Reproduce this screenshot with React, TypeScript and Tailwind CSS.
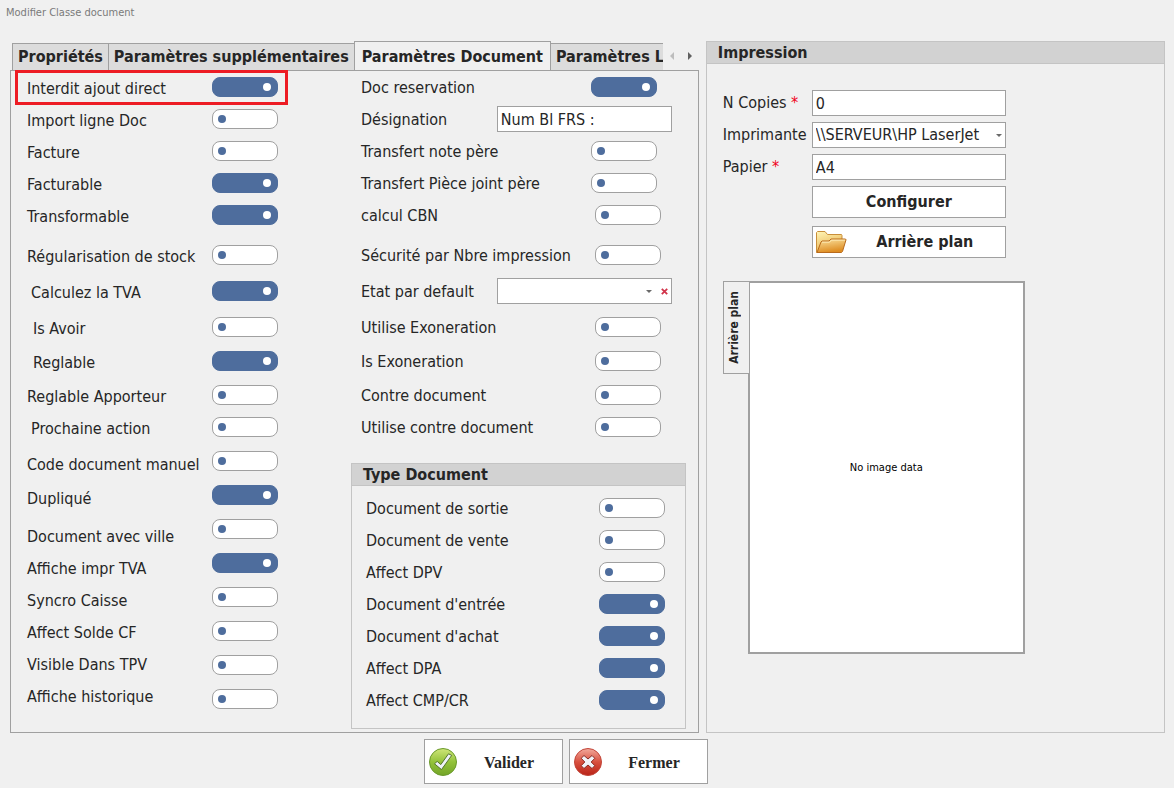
import React, { useState } from "react";
import clsx from "clsx";

type Option = {
  id: string;
  name: string;
  // spacing above the label and above its switch
  labelGap?: string;
  switchGap?: string;
  indent?: string;
  on?: boolean;
};

const generalOptions: Option[] = [
  { id: "interdit-ajout", name: "Interdit ajout direct", on: true },
  { id: "import-ligne", name: "Import ligne Doc", labelGap: "mt-3", switchGap: "mt-3" },
  { id: "facture", name: "Facture", labelGap: "mt-3", switchGap: "mt-3" },
  { id: "facturable", name: "Facturable", labelGap: "mt-3", switchGap: "mt-3", on: true },
  { id: "transformable", name: "Transformable", labelGap: "mt-3", switchGap: "mt-3", on: true },
  { id: "regularisation", name: "Régularisation de stock", labelGap: "mt-5", switchGap: "mt-5" },
  { id: "calcul-tva", name: "Calculez la TVA", labelGap: "mt-4", switchGap: "mt-4", indent: "pl-1", on: true },
  { id: "is-avoir", name: "Is Avoir", labelGap: "mt-4", switchGap: "mt-4", indent: "pl-1.5" },
  { id: "reglable", name: "Reglable", labelGap: "mt-3.5", switchGap: "mt-3.5", indent: "pl-1.5", on: true },
  { id: "reglable-apporteur", name: "Reglable Apporteur", labelGap: "mt-3.5", switchGap: "mt-3.5" },
  { id: "prochaine-action", name: "Prochaine action", labelGap: "mt-3", switchGap: "mt-3", indent: "pl-1" },
  { id: "code-manuel", name: "Code document manuel", labelGap: "mt-4", switchGap: "mt-3.5" },
  { id: "duplique", name: "Dupliqué", labelGap: "mt-3.5", switchGap: "mt-3.5", on: true },
  { id: "avec-ville", name: "Document avec ville", labelGap: "mt-4.5", switchGap: "mt-3.5" },
  { id: "impr-tva", name: "Affiche impr TVA", labelGap: "mt-3", switchGap: "mt-3.5", on: true },
  { id: "syncro-caisse", name: "Syncro Caisse", labelGap: "mt-3", switchGap: "mt-3.5" },
  { id: "solde-cf", name: "Affect Solde CF", labelGap: "mt-3", switchGap: "mt-3.5" },
  { id: "visible-tpv", name: "Visible Dans TPV", labelGap: "mt-3", switchGap: "mt-3.5" },
  { id: "historique", name: "Affiche historique", labelGap: "mt-3", switchGap: "mt-3.5" },
];

const typeOptions: Option[] = [
  { id: "doc-sortie", name: "Document de sortie" },
  { id: "doc-vente", name: "Document de vente" },
  { id: "affect-dpv", name: "Affect DPV" },
  { id: "doc-entree", name: "Document d'entrée", on: true },
  { id: "doc-achat", name: "Document d'achat", on: true },
  { id: "affect-dpa", name: "Affect DPA", on: true },
  { id: "affect-cmp", name: "Affect CMP/CR", on: true },
];

const tabs = ["Propriétés", "Paramètres supplémentaires", "Paramètres Document", "Paramètres Ligne"];

const fieldClass = "h-[26px] border border-[#a0a0a0] bg-white px-[3px] outline-none";

const Switch = ({ id, on, className }: { id: string; on?: boolean; className?: string }) => (
  <input
    id={id}
    type="checkbox"
    role="switch"
    defaultChecked={on}
    className={clsx(
      "flex h-5 w-[66px] shrink-0 appearance-none items-center rounded-lg border border-[#a0a0a0] bg-white px-[5px] before:size-2 before:rounded-full before:bg-[#4e6d9d] checked:justify-end checked:border-[#4e6d9d] checked:bg-[#4e6d9d] checked:pr-1.5 checked:before:bg-white",
      className
    )}
  />
);

const Row = ({
  id,
  name,
  className,
  children,
}: {
  id: string;
  name: string;
  className?: string;
  children: React.ReactNode;
}) => (
  <div className={clsx("flex h-5 items-center justify-between", className)}>
    <label htmlFor={id} className="pt-0.5 whitespace-nowrap">
      {name}
    </label>
    {children}
  </div>
);

const Caret = ({ className }: { className?: string }) => (
  <svg viewBox="0 0 6 3" className={clsx("pointer-events-none absolute h-[3px] w-1.5", className)}>
    <path d="M0 0h6L3 3z" fill="#6a6a6a" />
  </svg>
);

const FolderIcon = () => (
  <svg viewBox="0 0 32 24" className="h-6 w-8">
    <defs>
      <linearGradient id="folderBack" x1="0" y1="0" x2="0.4" y2="1">
        <stop offset="0" stopColor="#fff6b8" />
        <stop offset="1" stopColor="#e9b04d" />
      </linearGradient>
      <linearGradient id="folderFront" x1="0" y1="0" x2="0.3" y2="1">
        <stop offset="0" stopColor="#fbe3a0" />
        <stop offset="1" stopColor="#de8d22" />
      </linearGradient>
    </defs>
    <path d="M1.5 22.5V2.5L2.500 1.500h7.500l2.500 3h14l.5 1v5L24 22.500z" fill="url(#folderBack)" stroke="#c98f3a" />
    <path d="M2 22.500L6 12l1-1h7l2-2h14.500l.5.800L27.500 21.500l-1 1z" fill="url(#folderFront)" stroke="#b96a1c" />
    <path d="M7 12.200h7.500l2-2H30" fill="none" stroke="#fff0c0" strokeWidth="0.800" />
  </svg>
);

const CheckIcon = () => (
  <svg viewBox="0 0 30 30" className="size-[30px]">
    <defs>
      <linearGradient id="okFill" x1="0" y1="0" x2="0" y2="1">
        <stop offset="0" stopColor="#cfe67a" />
        <stop offset="0.5" stopColor="#93c23a" />
        <stop offset="1" stopColor="#73a528" />
      </linearGradient>
    </defs>
    <circle cx="15" cy="15" r="13.500" fill="url(#okFill)" stroke="#6a9a2c" />
    <path
      d="M6.500 16.800l2.700-2.400 3.600 3.200L20.500 6.800l3.200 1.600L13.500 22.600z"
      fill="#eef2f8"
      stroke="#55752c"
      strokeLinejoin="round"
    />
  </svg>
);

const CloseIcon = () => (
  <svg viewBox="0 0 30 30" className="size-[30px]">
    <defs>
      <linearGradient id="koFill" x1="0" y1="0" x2="0" y2="1">
        <stop offset="0" stopColor="#f3aa9c" />
        <stop offset="0.5" stopColor="#d8503f" />
        <stop offset="1" stopColor="#b92318" />
      </linearGradient>
    </defs>
    <circle cx="15" cy="15" r="13.500" fill="url(#koFill)" stroke="#c2463a" />
    <path
      d="M11 8.500L15 12l4-3.500 2.800 2.800L18.200 15l3.600 3.700-2.800 2.800L15 18l-4 3.500-2.800-2.800L11.800 15l-3.600-3.700z"
      fill="#f1f3f8"
      stroke="#8c2a22"
      strokeLinejoin="round"
    />
  </svg>
);

export default function App() {
  const [activeTab, setActiveTab] = useState("Paramètres Document");

  return (
    <div className="min-h-screen bg-[#f0f0f0] font-['DejaVu_Sans_Condensed','DejaVu_Sans',sans-serif] text-[16px] leading-5 text-[#262626]">
      <h1 className="px-1.5 pt-1 text-[11px] leading-[18px] text-[#7a7a7a]">Modifier Classe document</h1>

      <main className="grid grid-cols-[3fr_2fr] gap-[7px] pt-[19px] pr-[9px] pl-2.5">
        {/* ── Document settings ── */}
        <section className="flex min-w-0 flex-col">
          <div className="relative z-10 flex h-[30px] pl-0.5">
            <div role="tablist" className="flex min-w-0 flex-1 items-end overflow-hidden">
              {tabs.map((tab) => (
                <button
                  key={tab}
                  role="tab"
                  aria-selected={tab === activeTab}
                  onClick={() => setActiveTab(tab)}
                  className={clsx(
                    "-mr-px shrink-0 border border-[#a0a0a0] font-bold whitespace-nowrap",
                    tab === activeTab ? "h-[30px] border-b-0 px-[7px]" : "h-7 bg-[#dcdcdc] px-[5px]"
                  )}
                >
                  {tab}
                </button>
              ))}
            </div>
            <div className="flex w-9 shrink-0 items-center">
              <button aria-label="Onglet précédent" className="flex h-5 w-[18px] items-center justify-center">
                <svg viewBox="0 0 4 8" className="h-2 w-1">
                  <path d="M4 0v8L0 4z" fill="#bdbdbd" />
                </svg>
              </button>
              <button aria-label="Onglet suivant" className="flex h-5 w-[18px] items-center justify-center">
                <svg viewBox="0 0 4 8" className="h-2 w-1">
                  <path d="M0 0v8l4-4z" fill="#606060" />
                </svg>
              </button>
            </div>
          </div>

          <div className="relative -mt-px flex flex-1 border border-[#a0a0a0] pt-1.5 pr-3 pb-[3px] pl-4">
            <div className="pointer-events-none absolute -top-px left-1 z-20 h-[35px] w-[273px] border-3 border-[#ed1c24]" />

            <div className="flex w-[185px] shrink-0 flex-col pt-0.5">
              {generalOptions.map((opt) => (
                <label key={opt.id} htmlFor={opt.id} className={clsx("h-5 whitespace-nowrap", opt.labelGap, opt.indent)}>
                  {opt.name}
                </label>
              ))}
            </div>
            <div className="flex w-[66px] shrink-0 flex-col">
              {generalOptions.map((opt) => (
                <Switch key={opt.id} id={opt.id} on={opt.on} className={opt.switchGap} />
              ))}
            </div>

            <div className="ml-[73px] min-w-0 flex-1">
              <div className="pr-3.5 pl-2.5">
                <Row id="doc-reservation" name="Doc reservation">
                  <Switch id="doc-reservation" on className="mr-[15px]" />
                </Row>
                <Row id="designation" name="Désignation" className="mt-3">
                  <input id="designation" type="text" defaultValue="Num Bl FRS :" className={clsx(fieldClass, "w-[175px]")} />
                </Row>
                <Row id="note-pere" name="Transfert note père" className="mt-3">
                  <Switch id="note-pere" className="mr-[15px]" />
                </Row>
                <Row id="piece-pere" name="Transfert Pièce joint père" className="mt-3">
                  <Switch id="piece-pere" className="mr-[15px]" />
                </Row>
                <Row id="calcul-cbn" name="calcul CBN" className="mt-3">
                  <Switch id="calcul-cbn" className="mr-[11px]" />
                </Row>
                <Row id="securite" name="Sécurité par Nbre impression" className="mt-5">
                  <Switch id="securite" className="mr-[11px]" />
                </Row>
                <Row id="etat" name="Etat par default" className="mt-4">
                  <div className="relative">
                    <select id="etat" className={clsx(fieldClass, "block w-[175px] appearance-none")}>
                      <option value=""></option>
                    </select>
                    <Caret className="top-3 right-5" />
                    <button aria-label="Effacer" className="absolute top-2.5 right-1">
                      <svg viewBox="0 0 7 7" className="size-[7px]">
                        <path d="M.8.800l5.400 5.400M6.200.800L.8 6.200" stroke="#d1344b" strokeWidth="1.800" />
                      </svg>
                    </button>
                  </div>
                </Row>
                <Row id="utilise-exo" name="Utilise Exoneration" className="mt-4">
                  <Switch id="utilise-exo" className="mr-[11px]" />
                </Row>
                <Row id="is-exo" name="Is Exoneration" className="mt-3.5">
                  <Switch id="is-exo" className="mr-[11px]" />
                </Row>
                <Row id="contre-doc" name="Contre document" className="mt-3.5">
                  <Switch id="contre-doc" className="mr-[11px]" />
                </Row>
                <Row id="utilise-contre" name="Utilise contre document" className="mt-3">
                  <Switch id="utilise-contre" className="mr-[11px]" />
                </Row>
              </div>

              <section className="mt-[26px] border border-[#c4c4c4] pb-[18px]">
                <h2 className="h-[22px] border-b border-[#c4c4c4] bg-[#d2d2d2] pt-px pl-[11px] font-bold">
                  Type Document
                </h2>
                <div className="flex flex-col gap-3 pt-3 pr-5 pl-3.5">
                  {typeOptions.map((opt) => (
                    <Row key={opt.id} id={opt.id} name={opt.name}>
                      <Switch id={opt.id} on={opt.on} />
                    </Row>
                  ))}
                </div>
              </section>
            </div>
          </div>
        </section>

        {/* ── Printing ── */}
        <section className="flex min-w-0 flex-col border border-[#c4c4c4]">
          <h2 className="h-[22px] border-b border-[#c4c4c4] bg-[#d2d2d2] pt-px pl-[11px] font-bold">Impression</h2>

          <div className="grid grid-cols-[89px_194px] items-center gap-y-1.5 pt-[26px] pl-4">
            <label htmlFor="copies">
              N Copies <span className="text-[#f00020]">*</span>
            </label>
            <input id="copies" type="text" defaultValue="0" className={fieldClass} />
            <label htmlFor="imprimante">Imprimante</label>
            <div className="relative">
              <select id="imprimante" className={clsx(fieldClass, "block w-full appearance-none pr-4")}>
                <option>\\SERVEUR\HP LaserJet</option>
              </select>
              <Caret className="top-3 right-1" />
            </div>
            <label htmlFor="papier">
              Papier <span className="text-[#f00020]">*</span>
            </label>
            <input id="papier" type="text" defaultValue="A4" className={fieldClass} />
            <button className="col-start-2 h-8 border border-[#a0a0a0] bg-white font-bold">Configurer</button>
            <button className="col-start-2 mt-0.5 flex h-8 items-center border border-[#a0a0a0] bg-white px-0.5 font-bold">
              <FolderIcon />
              <span className="flex-1">Arrière plan</span>
            </button>
          </div>

          <div className="mt-[23px] flex items-start pl-4">
            <button className="relative z-10 -mr-0.5 flex h-[93px] w-[27px] items-center justify-center border border-[#a0a0a0] bg-[#f0f0f0] pr-1 text-[12px] font-bold">
              <span className="rotate-180 whitespace-nowrap [writing-mode:vertical-rl]">Arrière plan</span>
            </button>
            <div className="flex h-[373px] w-[277px] items-center justify-center border-2 border-[#a0a0a0] bg-white text-[11px] text-black">
              No image data
            </div>
          </div>
        </section>
      </main>

      <footer className="flex justify-center gap-1.5 pt-1.5 pr-[42px] pb-1 font-['Liberation_Serif',serif] font-bold">
        <button className="flex h-[45px] w-[139px] items-center border border-[#a0a0a0] bg-white pr-0.5 pl-[3px]">
          <CheckIcon />
          <span className="flex-1 pt-0.5">Valider</span>
        </button>
        <button className="flex h-[45px] w-[139px] items-center border border-[#a0a0a0] bg-white pr-0.5 pl-[3px]">
          <CloseIcon />
          <span className="flex-1 pt-0.5">Fermer</span>
        </button>
      </footer>
    </div>
  );
}
